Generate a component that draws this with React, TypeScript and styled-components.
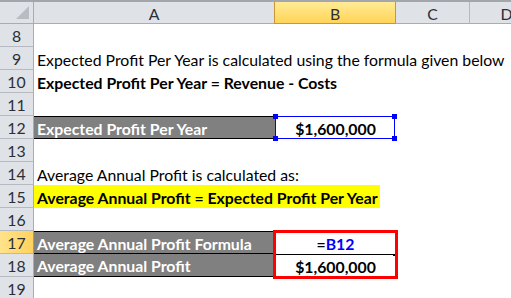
import React from "react";
import styled, { createGlobalStyle, css } from "styled-components";

const Global = createGlobalStyle`
  html, body { margin: 0; padding: 0; background: #fff; overflow: hidden; }
  body { font-family: "Lato", "Liberation Sans", sans-serif; }
`;

const COLS = "34px 241px 121px 74px 74px";
const FS = "15.8px";

const Sheet = styled.div`
  width: 511px;
  height: 298px;
  display: flex;
  flex-direction: column;
  background: #fff;
  overflow: hidden;
  position: relative;
`;

const HeaderRow = styled.div`
  display: grid;
  grid-template-columns: ${COLS};
  height: 24px;
  box-sizing: border-box;
  border-top: 2px solid #a3a7ad;
  flex: none;
`;

const ColHead = styled.div<{ $sel?: boolean }>`
  box-sizing: border-box;
  height: 22px;
  display: flex;
  align-items: center;
  justify-content: center;
  font-size: ${FS};
  color: #2b2f36;
  background: #dfe2e7;
  border-right: 1px solid #b6bac0;
  border-bottom: 1px solid #a9adb3;
  padding-top: 1px;
  ${(p) =>
    p.$sel &&
    css`
      background: linear-gradient(#ffeb95, #ffd458);
      border-left: 1px solid #c9973a;
      border-right: 1px solid #c9973a;
      border-bottom: 1px solid #c9973a;
      margin-left: -1px;
    `}
`;

const Corner = styled.div`
  box-sizing: border-box;
  height: 22px;
  background: #dfe2e7;
  border-right: 1px solid #a9adb3;
  border-bottom: 1px solid #a9adb3;
  position: relative;
  &::after {
    content: "";
    position: absolute;
    right: 4px;
    bottom: 4px;
    width: 0;
    height: 0;
    border-left: 13px solid transparent;
    border-bottom: 13px solid #b9bdc3;
  }
`;

const Row = styled.div`
  display: grid;
  grid-template-columns: ${COLS};
  height: 23px;
  flex: none;
`;

const RowHead = styled.div<{ $sel?: boolean }>`
  box-sizing: border-box;
  height: 23px;
  display: flex;
  align-items: center;
  justify-content: center;
  font-size: ${FS};
  color: #2b2f36;
  background: #dfe2e7;
  border-right: 1px solid #a9adb3;
  border-bottom: 1px solid #b6bac0;
  padding-top: 1px;
  ${(p) =>
    p.$sel &&
    css`
      background: linear-gradient(90deg, #ffe38a, #ffd25e);
      border-right: 1px solid #c9973a;
    `}
`;

const Cell = styled.div<{ $bold?: boolean; $fill?: string; $color?: string; $center?: boolean; $bt?: boolean; $bb?: boolean }>`
  box-sizing: border-box;
  height: 23px;
  display: flex;
  align-items: center;
  justify-content: ${(p) => (p.$center ? "center" : "flex-start")};
  padding: 1px 3px 0 3px;
  font-size: ${FS};
  white-space: nowrap;
  overflow: visible;
  color: ${(p) => p.$color || "#000"};
  font-weight: ${(p) => (p.$bold ? 700 : 400)};
  background: ${(p) => p.$fill || "transparent"};
  border-top: ${(p) => (p.$bt ? "1px solid #000" : "none")};
  border-bottom: ${(p) => (p.$bb ? "1px solid #000" : "none")};
  position: relative;
  z-index: 1;
`;

const Highlight = styled.span`
  display: inline-flex;
  align-items: center;
  height: 23px;
  margin: -1px 0 0 -3px;
  padding: 1px 2px 0 3px;
  width: 351px;
  box-sizing: border-box;
  background: #ffff00;
  font-weight: 700;
`;

const Ref = styled.span`
  color: #0000ff;
`;

const RefBox = styled.div`
  position: absolute;
  left: 275px;
  top: 116px;
  width: 120px;
  height: 23px;
  box-sizing: border-box;
  border: 1px solid #0000ff;
  pointer-events: none;
  z-index: 3;
`;

const Handle = styled.div<{ $x: "l" | "r"; $y: "t" | "b" }>`
  position: absolute;
  width: 5px;
  height: 5px;
  background: #0000ff;
  ${(p) => (p.$x === "l" ? "left: -3px;" : "right: -3px;")}
  ${(p) => (p.$y === "t" ? "top: -3px;" : "bottom: -3px;")}
`;

const RedBox = styled.div`
  position: absolute;
  left: 273px;
  top: 230px;
  width: 125px;
  height: 49px;
  box-sizing: border-box;
  border: 3px solid #ff0000;
  pointer-events: none;
  z-index: 3;
`;

const Divider = styled.div`
  position: absolute;
  left: 276px;
  top: 254px;
  width: 118px;
  height: 1px;
  background: #000;
  z-index: 2;
  &::after {
    content: "";
    position: absolute;
    right: -1px;
    top: 0;
    width: 2px;
    height: 2px;
    background: #000;
  }
`;

const GRAY = "#808080";

export default function App() {
  return (
    <>
      <Global />
      <Sheet>
        <HeaderRow>
          <Corner />
          <ColHead>A</ColHead>
          <ColHead $sel>B</ColHead>
          <ColHead>C</ColHead>
          <ColHead>D</ColHead>
        </HeaderRow>

        <Row>
          <RowHead>8</RowHead>
        </Row>
        <Row>
          <RowHead>9</RowHead>
          <Cell>Expected Profit Per Year is calculated using the formula given below</Cell>
        </Row>
        <Row>
          <RowHead>10</RowHead>
          <Cell $bold>Expected Profit Per Year = Revenue - Costs</Cell>
        </Row>
        <Row>
          <RowHead>11</RowHead>
        </Row>
        <Row>
          <RowHead>12</RowHead>
          <Cell $bold $fill={GRAY} $color="#fff" $bt $bb>
            Expected Profit Per Year
          </Cell>
          <Cell $bold $center>
            $1,600,000
          </Cell>
        </Row>
        <Row>
          <RowHead>13</RowHead>
        </Row>
        <Row>
          <RowHead>14</RowHead>
          <Cell>Average Annual Profit is calculated as:</Cell>
        </Row>
        <Row>
          <RowHead>15</RowHead>
          <Cell>
            <Highlight>Average Annual Profit = Expected Profit Per Year</Highlight>
          </Cell>
        </Row>
        <Row>
          <RowHead>16</RowHead>
        </Row>
        <Row>
          <RowHead $sel>17</RowHead>
          <Cell $bold $fill={GRAY} $color="#fff" $bt $bb>
            Average Annual Profit Formula
          </Cell>
          <Cell $bold $center>
            =<Ref>B12</Ref>
          </Cell>
        </Row>
        <Row>
          <RowHead>18</RowHead>
          <Cell $bold $fill={GRAY} $color="#fff" $bb>
            Average Annual Profit
          </Cell>
          <Cell $bold $center>
            $1,600,000
          </Cell>
        </Row>
        <Row>
          <RowHead>19</RowHead>
        </Row>

        <RefBox>
          <Handle $x="l" $y="t" />
          <Handle $x="r" $y="t" />
          <Handle $x="l" $y="b" />
          <Handle $x="r" $y="b" />
        </RefBox>
        <Divider />
        <RedBox />
      </Sheet>
    </>
  );
}
